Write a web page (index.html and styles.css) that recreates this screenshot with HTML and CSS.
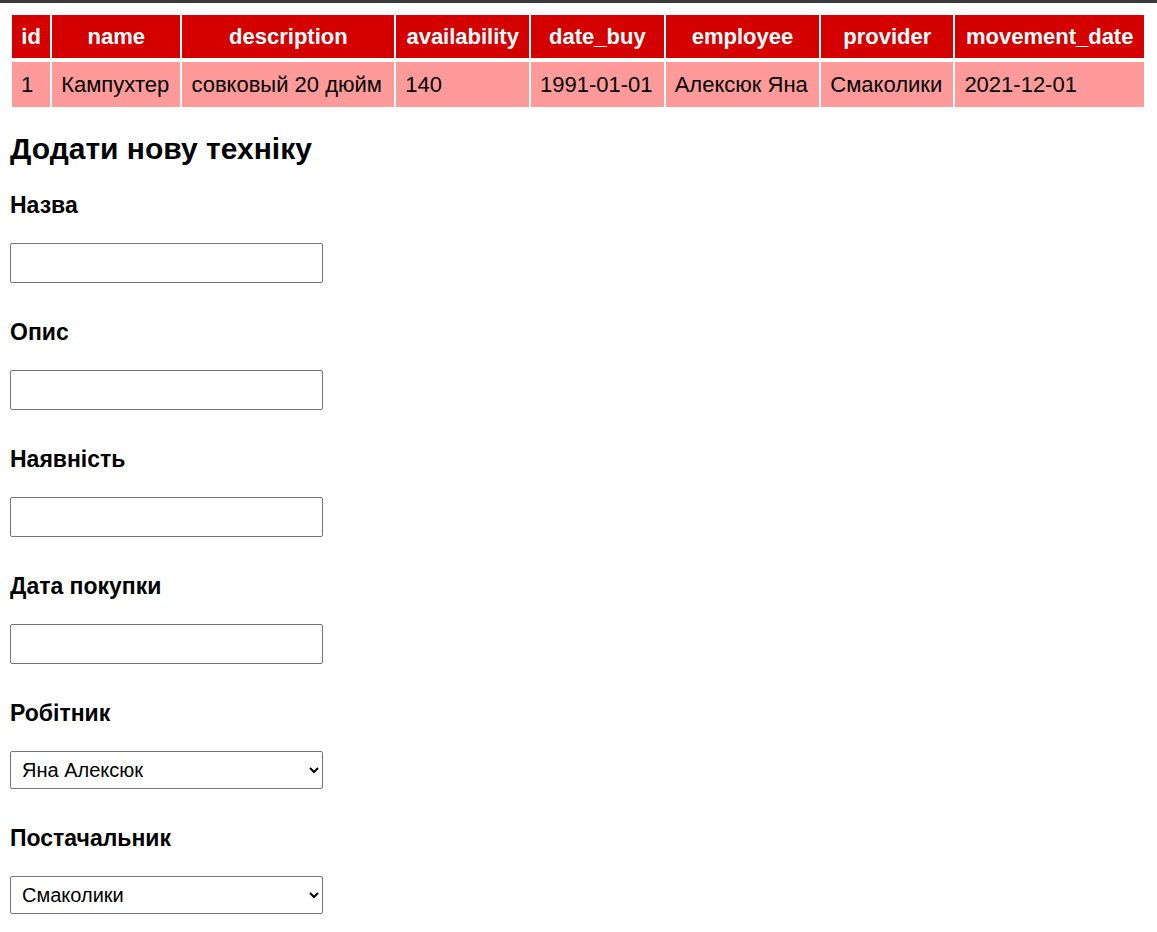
FILE: index.html
```html
<!DOCTYPE html>
<html lang="uk">
<head>
<meta charset="utf-8">
<title>Техніка</title>
<link rel="stylesheet" href="styles.css">
</head>
<body>
<div class="topbar"></div>
<main class="page">
  <table class="data">
    <thead>
      <tr>
        <th>id</th><th>name</th><th>description</th><th>availability</th><th>date_buy</th><th>employee</th><th>provider</th><th>movement_date</th>
      </tr>
    </thead>
    <tbody>
      <tr>
        <td>1</td><td>Кампухтер</td><td>совковый 20 дюйм</td><td>140</td><td>1991-01-01</td><td>Алексюк Яна</td><td>Смаколики</td><td>2021-12-01</td>
      </tr>
    </tbody>
  </table>

  <h2 class="title">Додати нову техніку</h2>
  <form class="form">
    <div class="field">
      <label class="label" for="f-name">Назва</label>
      <input class="control" id="f-name" type="text">
    </div>
    <div class="field">
      <label class="label" for="f-desc">Опис</label>
      <input class="control" id="f-desc" type="text">
    </div>
    <div class="field">
      <label class="label" for="f-avail">Наявність</label>
      <input class="control" id="f-avail" type="text">
    </div>
    <div class="field">
      <label class="label" for="f-date">Дата покупки</label>
      <input class="control" id="f-date" type="text">
    </div>
    <div class="field">
      <label class="label" for="f-emp">Робітник</label>
      <select class="control select" id="f-emp">
        <option>Яна Алексюк</option>
      </select>
    </div>
    <div class="field">
      <label class="label" for="f-prov">Постачальник</label>
      <select class="control select" id="f-prov">
        <option>Смаколики</option>
      </select>
    </div>
  </form>
</main>
</body>
</html>
```
FILE: styles.css
```css
html, body {
  margin: 0;
  padding: 0;
  background: #fff;
}
body {
  font-family: "Liberation Sans", Arial, sans-serif;
  color: #000;
}
.topbar {
  height: 3px;
  background: #3a3a3a;
}
.page {
  padding: 10px;
}
.data {
  border-collapse: separate;
  border-spacing: 2px;
  width: 1136px;
  font-size: 22px;
  line-height: 25px;
}
.data th {
  background: #d40000;
  color: #fff;
  font-weight: bold;
  text-align: center;
  padding: 9px 9px;
  border-bottom: 2px solid #fff;
  white-space: nowrap;
}
.data td {
  background: #ff9a9a;
  text-align: left;
  padding: 10px 9px;
  white-space: nowrap;
}
.title {
  font-size: 30px;
  line-height: 34px;
  font-weight: bold;
  margin: 23px 0 0;
}
.form {
  display: flex;
  flex-direction: column;
  margin-top: 26px;
}
.field {
  display: flex;
  flex-direction: column;
  align-items: flex-start;
  margin-bottom: 36px;
}
.label {
  font-size: 23px;
  line-height: 26px;
  font-weight: bold;
  margin-bottom: 25px;
}
.control {
  box-sizing: border-box;
  width: 313px;
  height: 40px;
  border: 1px solid #767676;
  border-radius: 2px;
  font-family: "Liberation Sans", Arial, sans-serif;
  font-size: 20px;
  padding: 0 10px;
  background: #fff;
}
.select {
  height: 38px;
  padding: 0 6px 0 7px;
  color: #000;
}
```
